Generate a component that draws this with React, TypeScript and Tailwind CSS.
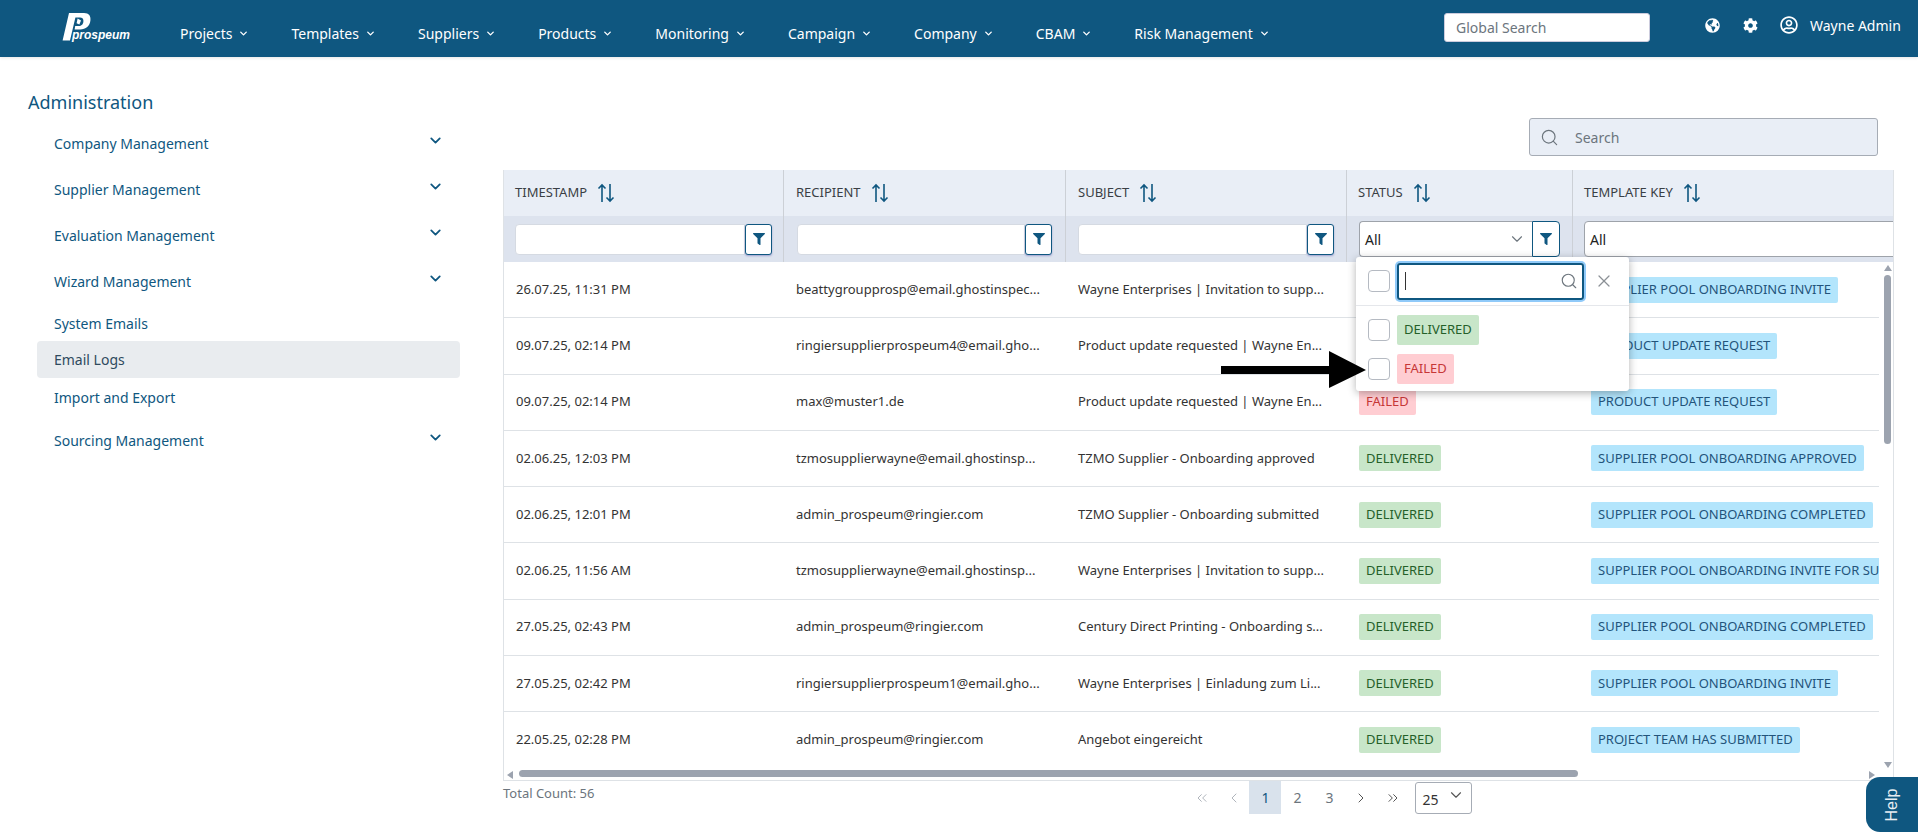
import { ChevronDown, ChevronLeft, ChevronRight, ChevronsLeft, ChevronsRight, Search, X } from "lucide-react";
import { FaCog, FaFilter, FaGlobeAmericas, FaRegUserCircle } from "react-icons/fa";

const NAV = ["Projects", "Templates", "Suppliers", "Products", "Monitoring", "Campaign", "Company", "CBAM", "Risk Management"];

const ROWS = [
  ["26.07.25, 11:31 PM", "beattygroupprosp@email.ghostinspec...", "Wayne Enterprises | Invitation to supp...", "DELIVERED", "SUPPLIER POOL ONBOARDING INVITE"],
  ["09.07.25, 02:14 PM", "ringiersupplierprospeum4@email.gho...", "Product update requested | Wayne En...", "FAILED", "PRODUCT UPDATE REQUEST"],
  ["09.07.25, 02:14 PM", "max@muster1.de", "Product update requested | Wayne En...", "FAILED", "PRODUCT UPDATE REQUEST"],
  ["02.06.25, 12:03 PM", "tzmosupplierwayne@email.ghostinsp...", "TZMO Supplier - Onboarding approved", "DELIVERED", "SUPPLIER POOL ONBOARDING APPROVED"],
  ["02.06.25, 12:01 PM", "admin_prospeum@ringier.com", "TZMO Supplier - Onboarding submitted", "DELIVERED", "SUPPLIER POOL ONBOARDING COMPLETED"],
  ["02.06.25, 11:56 AM", "tzmosupplierwayne@email.ghostinsp...", "Wayne Enterprises | Invitation to supp...", "DELIVERED", "SUPPLIER POOL ONBOARDING INVITE FOR SUPPLIER"],
  ["27.05.25, 02:43 PM", "admin_prospeum@ringier.com", "Century Direct Printing - Onboarding s...", "DELIVERED", "SUPPLIER POOL ONBOARDING COMPLETED"],
  ["27.05.25, 02:42 PM", "ringiersupplierprospeum1@email.gho...", "Wayne Enterprises | Einladung zum Li...", "DELIVERED", "SUPPLIER POOL ONBOARDING INVITE"],
  ["22.05.25, 02:28 PM", "admin_prospeum@ringier.com", "Angebot eingereicht", "DELIVERED", "PROJECT TEAM HAS SUBMITTED"],
];

function Logo() {
  return (
    <div className="relative h-[30px] w-[68px] shrink-0">
      <svg viewBox="0 0 30 28" className="absolute left-0 top-0 h-[28px] w-[30px]" fill="white">
        <path d="M7 0H22C27 0 29 3 28.4 7.5C27.8 13 24 16.5 18 16.5H12.6L13.2 13H17C20 13 21.6 10.5 21.4 7.5C21.3 5.5 20.2 4.4 18 4.4H13.4L8 27.5H0.6Z" />
        <path d="M15.6 5.6L19 7.6L17.4 11.4L14.6 10.2Z" />
      </svg>
      <span className="absolute left-[10px] top-[15px] font-['Liberation_Sans',sans-serif] text-[12px] leading-[14px] font-bold italic text-white">prospeum</span>
    </div>
  );
}

function SortIcon() {
  return (
    <svg viewBox="0 0 18 20" className="h-[20px] w-[18px] shrink-0" fill="none" stroke="#0f5780" strokeWidth="1.6">
      <path d="M5 19V2M1.5 5.5L5 2L8.5 5.5" />
      <path d="M13 1V18M9.5 14.5L13 18L16.5 14.5" />
    </svg>
  );
}

function Checkbox() {
  return <span className="block h-[22px] w-[22px] shrink-0 rounded-[4px] border border-[#b5bac2] bg-white" />;
}

function Chip({ label }: { label: string }) {
  const failed = label === "FAILED";
  return (
    <span className={failed ? "inline-flex h-[26px] items-center rounded-[2px] bg-[#ffcdd2] px-[7px] text-[#c63737]" : "inline-flex h-[26px] items-center rounded-[2px] bg-[#c8e6c9] px-[7px] text-[#256029]"}>
      {label}
    </span>
  );
}

function FilterButton({ tall }: { tall?: boolean }) {
  return (
    <span className={tall ? "flex h-[36px] w-[28px] shrink-0 items-center justify-center rounded-r-[4px] border border-[#0f5780] bg-white" : "flex h-[31px] w-[27px] shrink-0 items-center justify-center rounded-[3px] border border-[#0f5780] bg-white shadow-[0_1px_2px_rgba(60,60,160,0.4)]"}>
      <FaFilter className="h-[12px] w-[12px] text-[#0f5780]" />
    </span>
  );
}

function TextFilter() {
  return (
    <div className="flex h-full items-center">
      <span className="h-[31px] flex-1 rounded-l-[4px] border border-[#d5dae2] bg-white" />
      <FilterButton />
    </div>
  );
}

const SIDE = [
  { label: "Company Management", h: "h-[46px]", arrow: true },
  { label: "Supplier Management", h: "h-[46px]", arrow: true },
  { label: "Evaluation Management", h: "h-[46px]", arrow: true },
  { label: "Wizard Management", h: "h-[47px]", arrow: true },
  { label: "System Emails", h: "h-[36px]", arrow: false },
  { label: "Email Logs", h: "h-[37px]", arrow: false, active: true },
  { label: "Import and Export", h: "h-[39px]", arrow: false },
  { label: "Sourcing Management", h: "h-[46px]", arrow: true },
];

export default function App() {
  return (
    <div className="relative h-[832px] w-[1918px] overflow-hidden bg-white font-['Noto_Sans',sans-serif] text-[13px] text-[#333]">
      <header className="flex h-[57px] items-start bg-[#0f5780] pl-[62px] text-[14px] text-white shadow-[0_1px_3px_rgba(0,0,0,0.1)]">
        <div className="pt-[13px]">
          <Logo />
        </div>
        <nav className="ml-[50px] flex h-[57px] items-center gap-[42px] pt-[9px]">
          {NAV.map((item) => (
            <span key={item} className="flex items-center gap-[6px] whitespace-nowrap">
              {item}
              <ChevronDown className="h-[11px] w-[11px]" strokeWidth={3} />
            </span>
          ))}
        </nav>
        <span className="absolute left-[1444px] top-[13px] flex h-[29px] w-[206px] items-center rounded-[3px] border border-[#ccd] bg-white pl-[11px] text-[14px] text-[#6c757d]">Global Search</span>
        <div className="absolute left-[1705px] top-[15px] flex h-[20px] items-center">
          <FaGlobeAmericas className="h-[15px] w-[15px]" />
          <FaCog className="ml-[23px] h-[15px] w-[15px]" />
          <FaRegUserCircle className="ml-[22px] h-[18px] w-[18px]" />
          <span className="ml-[12px] whitespace-nowrap">Wayne Admin</span>
        </div>
      </header>

      <div className="flex">
        <aside className="w-[503px] shrink-0 pt-[31px] text-[14px] text-[#0f5780]">
          <h2 className="ml-[28px] h-[32px] text-[18px] leading-[28px]">Administration</h2>
          <ul className="ml-[37px] w-[423px]">
            {SIDE.map((s) => (
              <li key={s.label} className={`flex items-center justify-between pl-[17px] pr-[16px] ${s.h} ${s.active ? "rounded-[4px] bg-[#e9ecef] text-[#2f4a5e]" : ""}`}>
                {s.label}
                {s.arrow && <ChevronDown className="mb-[6px] h-[17px] w-[17px]" strokeWidth={2.5} />}
              </li>
            ))}
          </ul>
        </aside>

        <main className="w-[1391px] shrink-0">
          <div className="flex h-[113px] items-start justify-end pr-[16px] pt-[61px]">
            <div className="flex h-[38px] w-[349px] items-center rounded-[3px] border border-[#a6acb5] bg-[#e9eef6] pl-[10px] text-[14px] text-[#6c757d]">
              <Search className="h-[19px] w-[19px]" strokeWidth={1.5} />
              <span className="ml-[16px]">Search</span>
            </div>
          </div>

          <div className="h-[611px] w-[1391px] border-b border-l border-r border-[#dee2e6]">
            <div className="w-[1389px] overflow-hidden">
              <div className="flex h-[46px] bg-[#e9eef6] text-[#3a3f45]">
                <div className="flex w-[280px] shrink-0 items-center gap-[10px] border-r border-[#ccd0d6] pl-[11px]">TIMESTAMP <SortIcon /></div>
                <div className="flex w-[282px] shrink-0 items-center gap-[10px] border-r border-[#ccd0d6] pl-[12px]">RECIPIENT <SortIcon /></div>
                <div className="flex w-[281px] shrink-0 items-center gap-[10px] border-r border-[#ccd0d6] pl-[12px]">SUBJECT <SortIcon /></div>
                <div className="flex w-[226px] shrink-0 items-center gap-[10px] border-r border-[#ccd0d6] pl-[11px]">STATUS <SortIcon /></div>
                <div className="flex flex-1 items-center gap-[10px] pl-[11px]">TEMPLATE KEY <SortIcon /></div>
              </div>
              <div className="flex h-[46px] bg-[#dde3ee]">
                <div className="w-[280px] shrink-0 border-r border-[#ccd0d6] pl-[11px] pr-[11px]"><TextFilter /></div>
                <div className="w-[282px] shrink-0 border-r border-[#ccd0d6] pl-[13px] pr-[13px]"><TextFilter /></div>
                <div className="w-[281px] shrink-0 border-r border-[#ccd0d6] pl-[12px] pr-[12px]"><TextFilter /></div>
                <div className="flex w-[226px] shrink-0 items-center border-r border-[#ccd0d6] pl-[12px] pr-[12px]">
                  <div className="flex h-[36px] flex-1 items-center justify-between rounded-l-[4px] border border-r-0 border-[#9ea3aa] bg-white pl-[5px] pr-[6px] text-[14px] text-[#222]">
                    All
                    <ChevronDown className="h-[18px] w-[18px] text-[#6c757d]" strokeWidth={1.5} />
                  </div>
                  <FilterButton tall />
                </div>
                <div className="flex flex-1 items-center pl-[11px]">
                  <div className="flex h-[36px] w-[330px] shrink-0 items-center rounded-[4px] border border-[#9ea3aa] bg-white pl-[5px] text-[14px] text-[#222]">All</div>
                </div>
              </div>
              <div className="flex h-[508px]">
                <div className="w-[1375px] shrink-0 overflow-hidden">
                  {ROWS.map((row, i) => (
                    <div key={i} className="flex h-[56.25px] items-center border-b border-[#dee2e6] last:border-b-0">
                      <div className="w-[280px] shrink-0 whitespace-nowrap pl-[12px]">{row[0]}</div>
                      <div className="w-[282px] shrink-0 whitespace-nowrap pl-[12px]">{row[1]}</div>
                      <div className="w-[281px] shrink-0 whitespace-nowrap pl-[12px]">{row[2]}</div>
                      <div className="w-[226px] shrink-0 pl-[12px]"><Chip label={row[3]} /></div>
                      <div className="flex-1 whitespace-nowrap pl-[18px]">
                        <span className="inline-flex h-[26px] items-center rounded-[2px] bg-[#b3e5fc] px-[7px] text-[#23547b]">{row[4]}</span>
                      </div>
                    </div>
                  ))}
                </div>
                {/* vertical scrollbar */}
                <div className="flex flex-1 flex-col items-center pl-[3px] pt-[3px]">
                  <span className="h-0 w-0 border-x-[4px] border-b-[6px] border-x-transparent border-b-[#9ca3af]" />
                  <span className="mt-[4px] h-[169px] w-[7px] rounded-[4px] bg-[#9ca3af]" />
                  <span className="mt-auto mb-[2px] h-0 w-0 border-x-[4px] border-t-[6px] border-x-transparent border-t-[#9ca3af]" />
                </div>
              </div>
              {/* horizontal scrollbar */}
              <div className="flex h-[10px] items-start pl-[3px]">
                <span className="mt-[1px] h-0 w-0 border-y-[4px] border-r-[6px] border-y-transparent border-r-[#9ca3af]" />
                <span className="ml-[6px] h-[7px] w-[1059px] rounded-[4px] bg-[#9ca3af]" />
              </div>
            </div>
          </div>

          <div className="relative flex h-[34px] items-start text-[14px]">
            <span className="mt-[3px] text-[13px] text-[#6c757d]">Total Count: 56</span>
            <div className="ml-[600px] flex items-center text-[#6c757d]">
              <ChevronsLeft className="h-[16px] w-[16px] text-[#b0b5bc]" strokeWidth={1.5} />
              <ChevronLeft className="ml-[16px] h-[16px] w-[16px] text-[#b0b5bc]" strokeWidth={1.5} />
              <span className="ml-[7px] flex h-[33px] w-[32px] items-center justify-center bg-[#d9e2ec] text-[#0f5780]">1</span>
              <span className="flex h-[33px] w-[32px] items-center justify-center">2</span>
              <span className="flex h-[33px] w-[32px] items-center justify-center">3</span>
              <ChevronRight className="ml-[8px] h-[16px] w-[16px] text-[#555]" strokeWidth={1.5} />
              <ChevronsRight className="ml-[16px] h-[16px] w-[16px] text-[#555]" strokeWidth={1.5} />
              <div className="ml-[14px] flex h-[32px] w-[57px] items-center justify-between rounded-[3px] border border-[#a6acb5] bg-white pl-[6px] pr-[6px] text-[#333]">
                <span className="mt-[3px]">25</span>
                <ChevronDown className="mb-[6px] h-[18px] w-[18px] text-[#555]" strokeWidth={1.5} />
              </div>
            </div>
          </div>
        </main>
      </div>

      {/* status multiselect panel */}
      <div className="absolute left-[1356px] top-[257px] h-[134px] w-[273px] rounded-[3px] bg-white shadow-[0_2px_8px_rgba(0,0,0,0.3)]">
        <div className="flex h-[49px] items-center border-b border-[#e5e7eb] pl-[12px]">
          <Checkbox />
          <div className="ml-[7px] flex h-[37px] w-[187px] items-center justify-between rounded-[3px] border-2 border-[#0f5780] pl-[6px] pr-[4px] shadow-[0_0_0_2px_#90caf9]">
            <span className="h-[18px] w-px bg-[#333]" />
            <Search className="h-[18px] w-[18px] text-[#6c757d]" strokeWidth={1.5} />
          </div>
          <X className="ml-[10px] h-[20px] w-[20px] text-[#8b9096]" strokeWidth={1.5} />
        </div>
        <div className="flex h-[42px] items-center gap-[7px] pl-[12px] pt-[6px]">
          <Checkbox />
          <span className="flex h-[30px] items-center rounded-[2px] bg-[#c8e6c9] px-[7px] text-[#256029]">DELIVERED</span>
        </div>
        <div className="flex h-[42px] items-center gap-[7px] pl-[12px]">
          <Checkbox />
          <span className="flex h-[30px] items-center rounded-[2px] bg-[#ffcdd2] px-[7px] text-[#c63737]">FAILED</span>
        </div>
      </div>

      {/* annotation arrow */}
      <svg className="absolute left-[1221px] top-[351px] h-[37px] w-[146px]" viewBox="0 0 146 37" fill="black">
        <path d="M0 15H108V0L145 19L108 37V23H0Z" />
      </svg>

      <div className="absolute left-[1866px] top-[777px] flex h-[55px] w-[52px] items-center justify-center rounded-l-[14px] bg-[#0f5780]">
        <span className="-rotate-90 font-['Liberation_Sans',sans-serif] text-[16px] text-[#e8eef3]">Help</span>
      </div>
      <span className="absolute left-[1869px] top-[771px] h-0 w-0 border-y-[4px] border-l-[6px] border-y-transparent border-l-[#9ca3af]" />
    </div>
  );
}
